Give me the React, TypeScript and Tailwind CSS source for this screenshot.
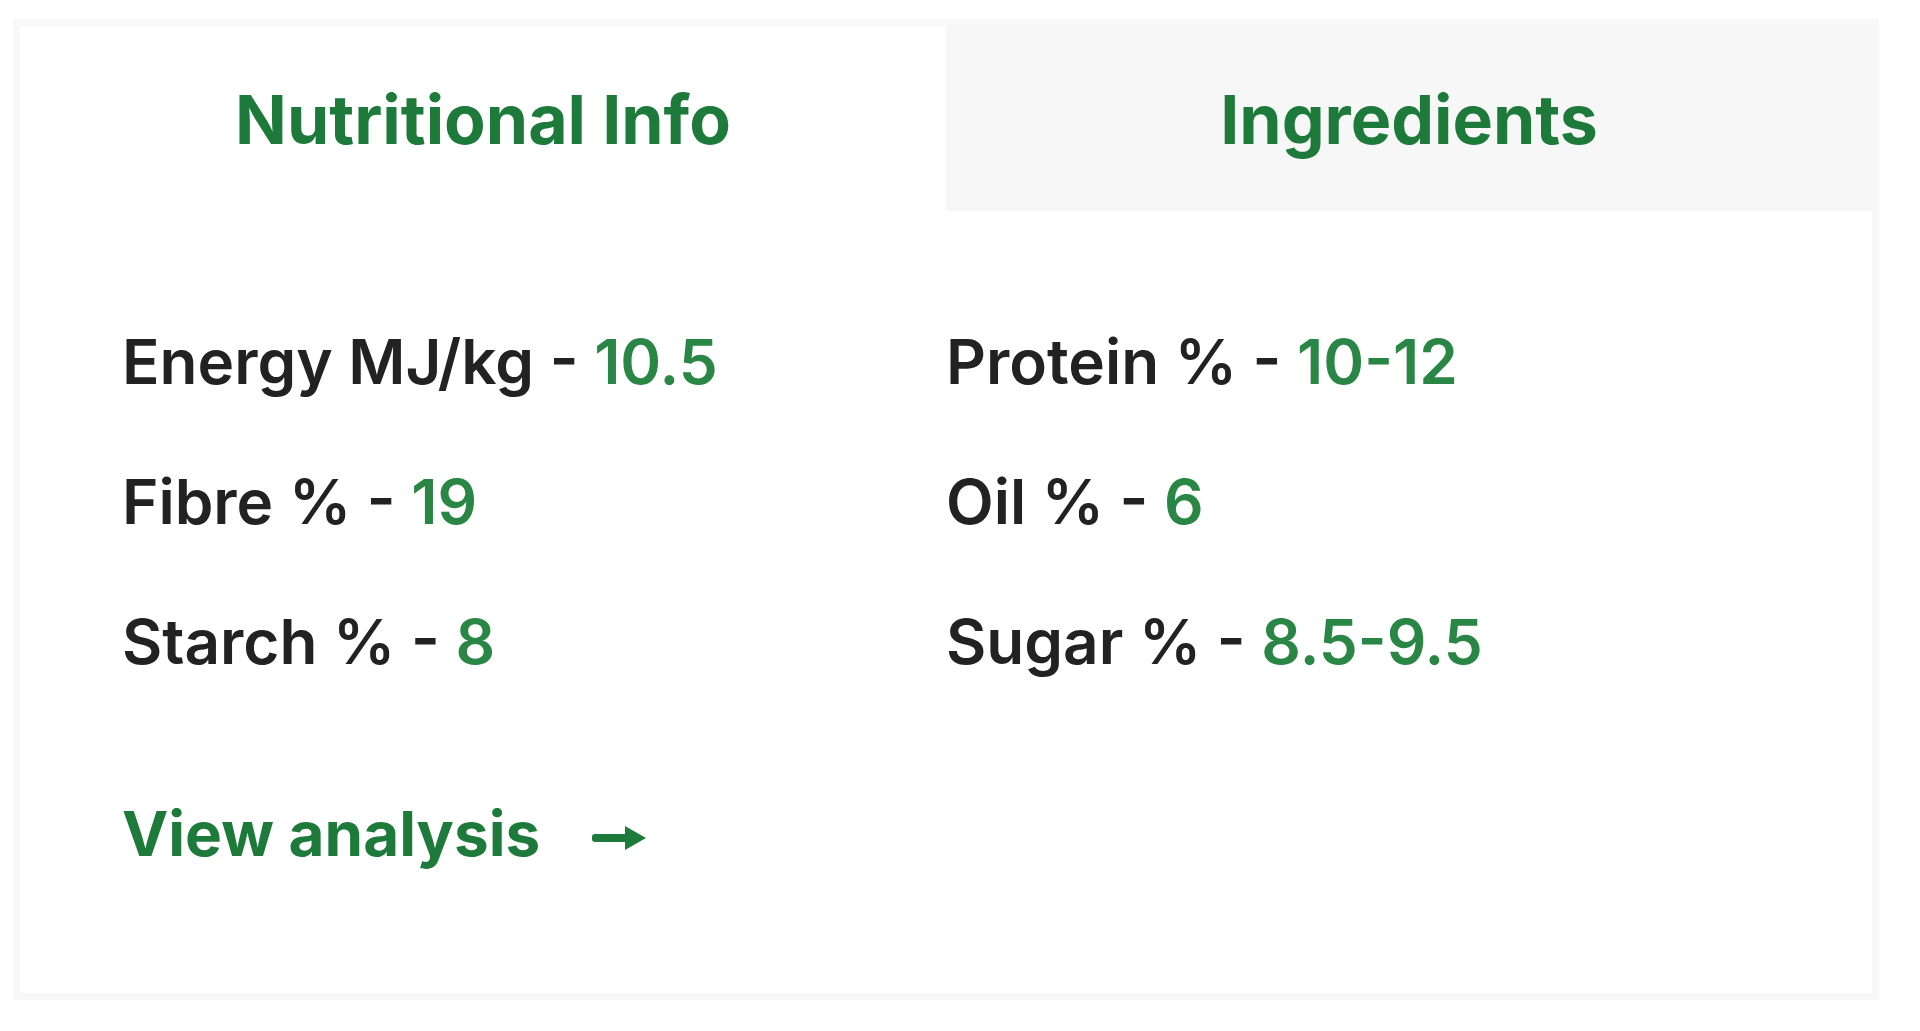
import React from 'react';

const left = [
  { label: 'Energy MJ/kg', value: '10.5' },
  { label: 'Fibre %', value: '19' },
  { label: 'Starch %', value: '8' },
];

const right = [
  { label: 'Protein %', value: '10-12' },
  { label: 'Oil %', value: '6' },
  { label: 'Sugar %', value: '8.5-9.5' },
];

const Row = ({ label, value }: { label: string; value: string }) => (
  <div className="text-[62px] leading-[140px] font-semibold text-[#222222] whitespace-nowrap">
    {label} - <span className="text-[#2a8645]">{value}</span>
  </div>
);

const App = () => {
  return (
    <div className="min-h-screen bg-white pt-[19px] pl-[13px] font-['Inter',sans-serif]">
      <div className="w-[1866px] h-[981px] border-[7px] border-[#f8f8f8] bg-white flex flex-col">
        <div className="grid grid-cols-2 h-[185px]">
          <div className="flex items-center justify-center bg-white">
            <span className="text-[68px] leading-none font-bold text-[#1d7a3a]">Nutritional Info</span>
          </div>
          <div className="flex items-center justify-center bg-[#f7f7f7]">
            <span className="text-[68px] leading-none font-bold text-[#1d7a3a]">Ingredients</span>
          </div>
        </div>

        <div className="pl-[102px] pr-[98px] pt-[81px]">
          <div className="grid grid-cols-[824px_1fr]">
            <div className="flex flex-col">
              {left.map((el, i) => (
                <Row {...el} key={i} />
              ))}
            </div>
            <div className="flex flex-col">
              {right.map((el, i) => (
                <Row {...el} key={i} />
              ))}
            </div>
          </div>

          <a href="#" className="mt-[52px] flex items-center gap-[52px] text-[#1d7a3a]">
            <span className="text-[62px] leading-[140px] font-bold">View analysis</span>
            <svg width="54" height="24" viewBox="0 0 54 24" className="mt-[7px]" fill="currentColor">
              <rect x="0" y="8" width="37" height="8" rx="3" />
              <polygon points="33,0 54,12 33,24" />
            </svg>
          </a>
        </div>
      </div>
    </div>
  );
};

export default App;
